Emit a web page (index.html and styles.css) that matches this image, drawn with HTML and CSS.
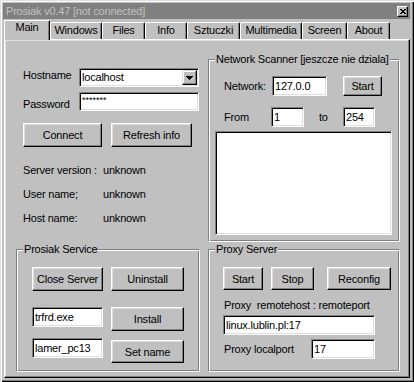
FILE: index.html
```html
<!DOCTYPE html>
<html lang="pl">
<head>
    <meta charset="UTF-8">
    <meta name="viewport" content="width=device-width, initial-scale=1.0">
    <title>Prosiak v0.47</title>
    <link rel="stylesheet" href="styles.css">
</head>
<body>
    <div class="window">
        <div class="titlebar">
            <span class="title">Prosiak v0.47 [not connected]</span>
            <button class="close-btn" title="Close">
                <svg width="6" height="5" viewBox="0 0 6 5" shape-rendering="crispEdges">
                    <path d="M0 0h2v1H0zM4 0h2v1H4zM1 1h4v1H1zM2 2h2v1H2zM1 3h4v1H1zM0 4h2v1H0zM4 4h2v1H4z"/>
                </svg>
            </button>
        </div>

        <div class="tabs">
            <div class="tab active tab-main">Main</div>
            <div class="tab tab-windows">Windows</div>
            <div class="tab tab-files">Files</div>
            <div class="tab tab-info">Info</div>
            <div class="tab tab-tricks">Sztuczki</div>
            <div class="tab tab-media">Multimedia</div>
            <div class="tab tab-screen">Screen</div>
            <div class="tab tab-about">About</div>
        </div>

        <div class="panel">
            <div class="col col-left">
                <div class="row row-host">
                    <label class="lbl">Hostname</label>
                    <div class="combo">
                        <span class="combo-text">localhost</span>
                        <span class="combo-btn">
                            <svg width="7" height="4" viewBox="0 0 7 4" shape-rendering="crispEdges">
                                <path d="M0 0h7v1H0zM1 1h5v1H1zM2 2h3v1H2zM3 3h1v1H3z"/>
                            </svg>
                        </span>
                    </div>
                </div>
                <div class="row row-pass">
                    <label class="lbl">Password</label>
                    <input class="field field-pass" type="text" value="*******" readonly>
                </div>
                <div class="row row-btns">
                    <button class="btn btn-connect">Connect</button>
                    <button class="btn btn-refresh">Refresh info</button>
                </div>

                <div class="info">
                    <span>Server version :</span><span>unknown</span>
                    <span>User name;</span><span>unknown</span>
                    <span>Host name:</span><span>unknown</span>
                </div>

                <fieldset class="group group-service">
                    <legend>Prosiak Service</legend>
                    <div class="svc-row">
                        <button class="btn btn-close-srv">Close Server</button>
                        <button class="btn btn-svc">Uninstall</button>
                    </div>
                    <div class="svc-row svc-row-2">
                        <input class="field field-svc" type="text" value="trfrd.exe" readonly>
                        <button class="btn btn-svc">Install</button>
                    </div>
                    <div class="svc-row svc-row-3">
                        <input class="field field-svc" type="text" value="lamer_pc13" readonly>
                        <button class="btn btn-svc btn-setname">Set name</button>
                    </div>
                </fieldset>
            </div>

            <div class="col col-right">
                <fieldset class="group group-scan">
                    <legend>Network Scanner [jeszcze nie dziala]</legend>
                    <div class="net-row">
                        <label class="net-lbl">Network:</label>
                        <input class="field field-net" type="text" value="127.0.0" readonly>
                        <button class="btn btn-scan">Start</button>
                    </div>
                    <div class="net-row net-row-2">
                        <label class="net-lbl net-lbl-from">From</label>
                        <input class="field field-from" type="text" value="1" readonly>
                        <label class="to-lbl">to</label>
                        <input class="field field-to" type="text" value="254" readonly>
                    </div>
                    <div class="list"></div>
                </fieldset>

                <fieldset class="group group-proxy">
                    <legend>Proxy Server</legend>
                    <div class="proxy-btns">
                        <button class="btn btn-pstart">Start</button>
                        <button class="btn btn-pstop">Stop</button>
                        <button class="btn btn-reconfig">Reconfig</button>
                    </div>
                    <div class="proxy-lbl">Proxy&nbsp; remotehost : remoteport</div>
                    <input class="field field-remote" type="text" value="linux.lublin.pl:17" readonly>
                    <div class="proxy-row">
                        <label class="port-lbl">Proxy localport</label>
                        <input class="field field-port" type="text" value="17" readonly>
                    </div>
                </fieldset>
            </div>
        </div>
    </div>
</body>
</html>
```

FILE: styles.css
```css
* {
    box-sizing: border-box;
}

body {
    margin: 0;
    background: #c0c0c0;
    font-family: "Liberation Sans", Arial, sans-serif;
    font-size: 11px;
    letter-spacing: -0.2px;
    color: #000;
}

/* window frame */
.window {
    width: 414px;
    height: 382px;
    padding: 3px 4px 0 3px;
    background: #c0c0c0;
    box-shadow: inset 1px 1px #dfdfdf, inset 2px 2px #fff,
                inset -1px -1px #000, inset -2px -2px #808080;
}

.titlebar {
    height: 16px;
    padding: 0 2px 0 3px;
    background: #808080;
    color: #c0c0c0;
    display: flex;
    align-items: center;
    justify-content: space-between;
}

.title {
    line-height: 16px;
}

.close-btn {
    width: 11px;
    height: 11px;
    padding: 0;
    display: flex;
    align-items: center;
    justify-content: center;
    background: #c0c0c0;
    border: 1px solid;
    border-color: #fff #000 #000 #fff;
    box-shadow: inset -1px -1px #808080;
}

/* tabs */
.tabs {
    display: flex;
    align-items: flex-end;
    height: 19px;
    margin: 1px 0 0 1px;
}

.tab {
    height: 17px;
    padding-top: 1px;
    line-height: 13px;
    text-align: center;
    border: 1px solid;
    border-color: #fff #000 transparent #fff;
    border-bottom: 0;
    border-radius: 2px 2px 0 0;
    box-shadow: inset -1px 0 #808080;
}

.tab.active {
    height: 20px;
    padding-top: 0;
    margin-bottom: -1px;
    position: relative;
    z-index: 1;
    background: #c0c0c0;
}

.tab-main { width: 46px; }
.tab-windows { width: 52px; }
.tab-files { width: 43px; }
.tab-info { width: 42px; }
.tab-tricks { width: 53px; }
.tab-media { width: 62px; }
.tab-screen { width: 45px; }
.tab-about { width: 43px; }

.panel {
    height: 339px;
    margin-left: 1px;
    border: 1px solid;
    border-color: #fff #000 #000 #fff;
    box-shadow: inset -1px -1px #808080, inset 1px 1px #dfdfdf;
    display: grid;
    grid-template-columns: 202px 202px;
}

/* shared controls */
.btn {
    padding: 0;
    font: inherit;
    letter-spacing: inherit;
    color: #000;
    background: #c0c0c0;
    border: 1px solid;
    border-color: #fff #000 #000 #fff;
    box-shadow: inset -1px -1px #808080, inset 1px 1px #dfdfdf;
}

.field {
    height: 20px;
    margin: 0;
    padding: 0 2px;
    font: inherit;
    letter-spacing: inherit;
    color: #000;
    background: #fff;
    border: 1px solid;
    border-color: #808080 #fff #fff #808080;
    box-shadow: inset 1px 1px #000, inset -1px -1px #dfdfdf;
    outline: none;
}

.group {
    margin: 0;
    min-width: 0;
    padding: 11px 0 8px 6px;
    border: 1px solid;
    border-color: #808080 #fff #fff #808080;
    box-shadow: inset 1px 1px #fff, inset -1px -1px #808080;
}

.group legend {
    padding: 0 1px;
    line-height: 13px;
    background: #c0c0c0;
}

/* left column */
.col-left {
    padding-top: 28px;
}

.row {
    display: flex;
    align-items: flex-start;
    padding-left: 18px;
}

.lbl {
    width: 56px;
    line-height: 13px;
}

.row-host .lbl { margin-top: 1px; }
.row-pass .lbl { margin-top: 6px; }

.combo {
    width: 120px;
    height: 19px;
    padding: 1px;
    display: flex;
    background: #fff;
    border: 1px solid;
    border-color: #808080 #fff #fff #808080;
    box-shadow: inset 1px 1px #000, inset -1px -1px #dfdfdf;
}

.combo-text {
    flex: 1;
    padding-left: 1px;
    line-height: 15px;
}

.combo-btn {
    width: 15px;
    height: 15px;
    display: flex;
    align-items: center;
    justify-content: center;
    background: #c0c0c0;
    border: 1px solid;
    border-color: #dfdfdf #000 #000 #dfdfdf;
    box-shadow: inset -1px -1px #808080, inset 1px 1px #fff;
}

.row-pass {
    margin-top: 5px;
}

.field-pass {
    width: 120px;
    height: 19px;
    padding-bottom: 4px;
    font-size: 9px;
    letter-spacing: 0;
}

.row-btns {
    margin-top: 12px;
    gap: 9px;
}

.btn-connect { width: 79px; height: 24px; }
.btn-refresh { width: 81px; height: 24px; }

.info {
    margin-top: 17px;
    padding-left: 18px;
    display: grid;
    grid-template-columns: 80px auto;
    row-gap: 11px;
    line-height: 13px;
}

.group-service {
    width: 184px;
    margin: 18px 0 0 11px;
}

.svc-row {
    display: flex;
    align-items: flex-start;
    gap: 8px;
    padding-left: 9px;
}

.svc-row-2 { margin-top: 16px; }
.svc-row-3 { margin-top: 7px; }

.btn-close-srv { width: 71px; height: 24px; }
.btn-svc { width: 73px; height: 24px; }
.btn-setname { height: 23px; margin-top: 2px; }
.field-svc { width: 71px; }

/* right column */
.col-right {
    padding: 13px 0 0 1px;
}

.group-scan {
    width: 192px;
    padding: 10px 0 6px 6px;
}

.net-row {
    display: flex;
    align-items: center;
    padding-left: 9px;
}

.net-row-2 { margin-top: 11px; }

.net-lbl { width: 48px; }
.net-lbl-from { width: 47px; }

.field-net { width: 55px; }
.btn-scan { width: 39px; height: 20px; margin-left: 16px; }
.field-from { width: 33px; }
.to-lbl { width: 24px; margin-left: 15px; }
.field-to { width: 32px; }

.list {
    width: 177px;
    height: 104px;
    margin-top: 4px;
    background: #fff;
    border: 1px solid;
    border-color: #808080 #fff #fff #808080;
    box-shadow: inset 1px 1px #000, inset -1px -1px #dfdfdf;
}

.group-proxy {
    width: 192px;
    margin-top: 1px;
    padding: 11px 0 12px 6px;
}

.proxy-btns {
    display: flex;
    padding-left: 8px;
}

.proxy-btns .btn { height: 23px; }
.btn-pstart { width: 40px; }
.btn-pstop { width: 43px; margin-left: 8px; }
.btn-reconfig { width: 64px; margin-left: 13px; }

.proxy-lbl {
    margin-top: 9px;
    padding-left: 9px;
    line-height: 13px;
}

.field-remote {
    display: block;
    width: 152px;
    margin: 3px 0 0 8px;
}

.proxy-row {
    display: flex;
    align-items: center;
    margin-top: 4px;
    padding-left: 9px;
}

.port-lbl { width: 87px; }
.field-port { width: 64px; }
```
